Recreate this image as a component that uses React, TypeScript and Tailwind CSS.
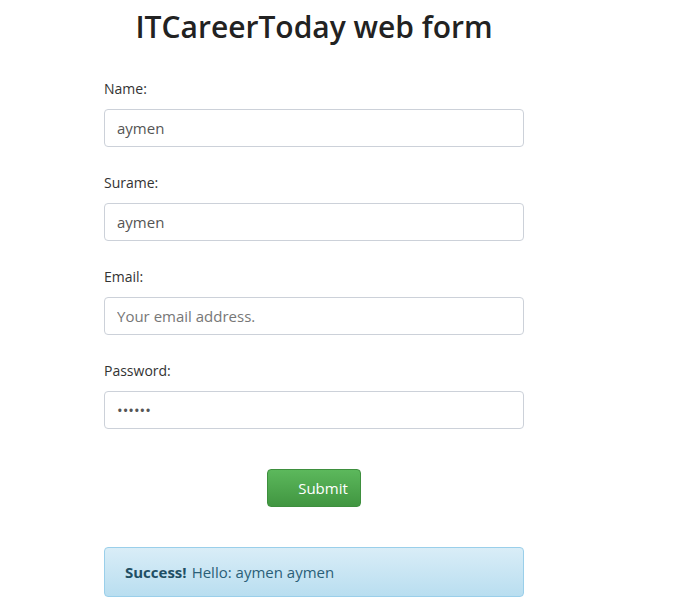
const fields = [
  { label: "Name:", value: "aymen", type: "text" },
  { label: "Surame:", value: "aymen", type: "text" },
  { label: "Email:", value: "", type: "email", placeholder: "Your email address." },
  { label: "Password:", value: "aymens", type: "password" },
];

const App = () => {
  return (
    <div className="min-h-[609px] bg-white text-[#333] font-['Open_Sans',sans-serif]">
      <div className="ml-[104px] w-[420px]">
        <h2 className="pt-[9px] text-center text-[30px] leading-[36px] font-semibold text-[#222] whitespace-nowrap">
          ITCareerToday web form
        </h2>

        <form className="mt-[34px] flex flex-col gap-[26px]" onSubmit={(e) => e.preventDefault()}>
          {fields.map((f) => (
            <div key={f.label} className="flex flex-col">
              <label className="text-[14px] leading-[20px] text-[#333]">{f.label}</label>
              <input
                type={f.type}
                defaultValue={f.value}
                placeholder={f.placeholder}
                className="mt-[10px] h-[38px] w-full rounded-[4px] border border-[#ccd1d9] px-[12px] text-[15px] text-[#555] placeholder:text-[#777] outline-none"
              />
            </div>
          ))}

          <div className="mt-[14px] flex justify-center">
            <button
              type="submit"
              className="h-[38px] w-[94px] rounded-[4px] border border-[#3e8f3e] bg-gradient-to-b from-[#5cb85c] to-[#419641] pl-[18px] text-[15px] text-white"
            >
              Submit
            </button>
          </div>
        </form>

        <div className="mt-[40px] h-[50px] rounded-[4px] border border-[#9acfea] bg-gradient-to-b from-[#d9edf7] to-[#b9def0] px-[20px] flex items-center text-[15px] text-[#2a5f78]">
          <strong className="font-bold text-[#1f4f64]">Success!</strong>
          <span className="ml-[5px]">Hello: aymen aymen</span>
        </div>
      </div>
    </div>
  );
};

export default App;
